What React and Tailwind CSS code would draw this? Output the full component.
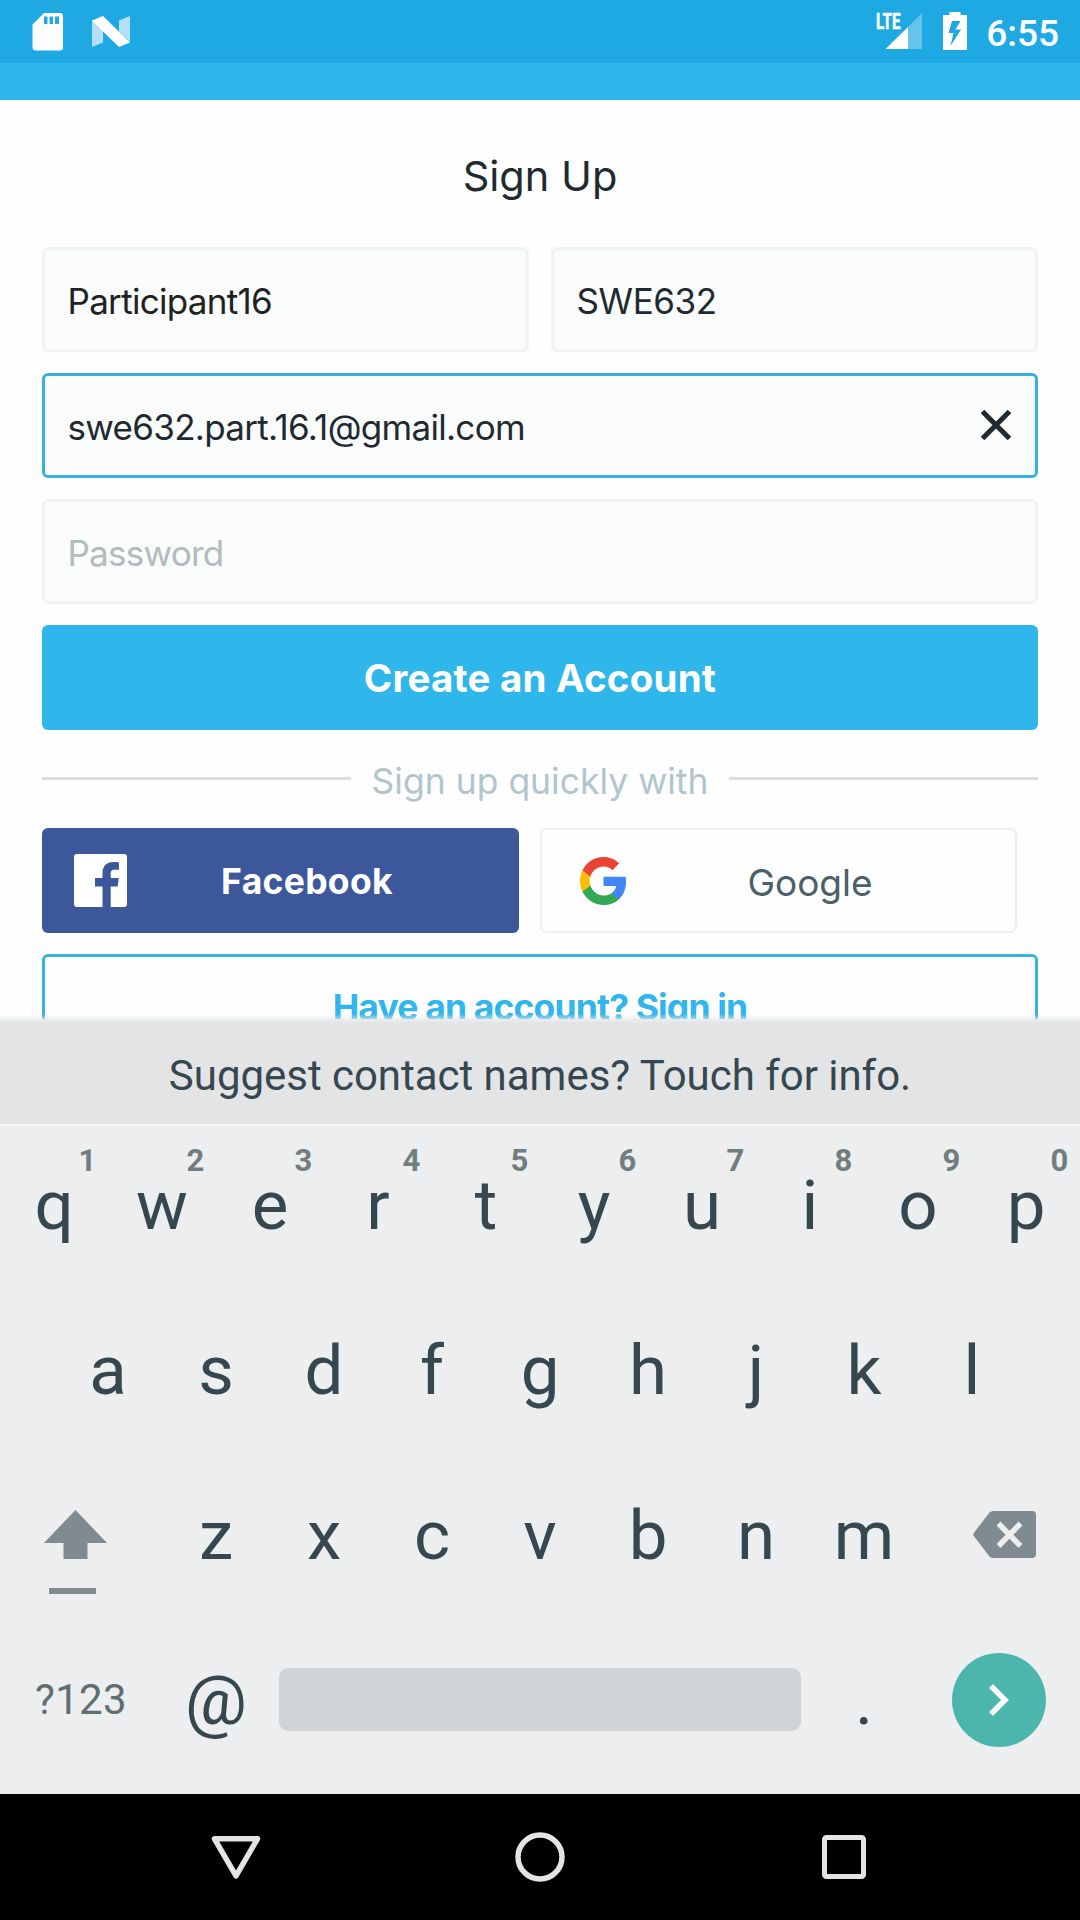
const TOP_ROW = "qwertyuiop".split("");
const HOME_ROW = "asdfghjkl".split("");
const BOTTOM_ROW = "zxcvbnm".split("");

function StatusBar() {
  return (
    <header className="flex h-[63px] shrink-0 items-start bg-[#1fa9e3] font-[Roboto,sans-serif]">
      <svg className="ml-8 mt-3 h-10 w-8" viewBox="0 0 32 40" fill="#fff">
        <path
          fillRule="evenodd"
          d="M12 1h16a3 3 0 0 1 3 3v31.500a3 3 0 0 1-3 3H3.500a3 3 0 0 1-3-3V12.500zM12 4.500v7.500h3.500V4.500zM17.500 4.500v7.500h3.500V4.500zM23 4.500v7.500h4V4.500z"
        />
      </svg>
      <svg className="ml-7 mt-4 h-8 w-[38px]" viewBox="0 0 38 32">
        <path d="M0 4v27l11-4.500V9zM27 4.500L38 0v26L27 15.500z" fill="#b5dff5" />
        <path d="M0 4.500L11 0l27 26.500-11 4.500L11 15.500z" fill="#fff" />
      </svg>
      <svg className="ml-auto mr-[21px] mt-3 h-[38px] w-[46px] overflow-visible" viewBox="0 0 46 38">
        <path d="M46 1v36H32V15z" fill="#66c3ec" />
        <path d="M32 15v22H9.500z" fill="#fff" />
        <text x="0" y="17" fill="#fff" stroke="#fff" strokeWidth="0.5" fontSize="22" fontWeight="700" textLength="24.500" lengthAdjust="spacingAndGlyphs">
          LTE
        </text>
      </svg>
      <svg className="mr-[19px] mt-3 h-[38px] w-6" viewBox="0 0 24 38" fill="#fff">
        <path fillRule="evenodd" d="M6.500 0h11v3H24v35H0V3h6.500zM9 9L5.500 21h5L7.500 34 18 17.500h-5.500L17.500 9z" />
      </svg>
      <span className="mr-[21px] mt-3 text-[37px] font-medium leading-[44px] text-white">6:55</span>
    </header>
  );
}

function Field({ children, className }) {
  return (
    <div className={`flex h-[105px] flex-1 items-center rounded-md border-[3px] bg-[#fafbfb] pl-[22.500px] pt-[3px] text-[35px] ${className}`}>
      {children}
    </div>
  );
}

function FacebookMark() {
  return (
    <svg className="ml-8 h-[53px] w-[53px] shrink-0" viewBox="0 0 53 53">
      <rect width="53" height="53" rx="3" fill="#fff" />
      <path d="M28.500 53V32.500H21V24h7.500v-4.500C28.500 12 32.500 8 39 8c2.500 0 5 .2 6 .4v7.300h-4.300c-3.300 0-4 1.600-4 4V24h8l-1 8.500h-7V53z" fill="#3d589a" />
    </svg>
  );
}

function GoogleMark() {
  return (
    <svg className="ml-[38px] h-12 w-[47px] shrink-0" viewBox="1 1 22 22" preserveAspectRatio="none">
      <path fill="#4285f4" d="M22.560 12.250c0-.78-.07-1.530-.2-2.250H12v4.260h5.920c-.26 1.370-1.040 2.530-2.210 3.310v2.770h3.570c2.080-1.920 3.280-4.740 3.280-8.090z" />
      <path fill="#34a853" d="M12 23c2.970 0 5.460-.98 7.280-2.660l-3.570-2.770c-.98.66-2.230 1.060-3.710 1.060-2.860 0-5.290-1.930-6.160-4.530H2.180v2.840C3.990 20.530 7.700 23 12 23z" />
      <path fill="#fbbc05" d="M5.840 14.090c-.22-.66-.35-1.360-.35-2.090s.13-1.430.35-2.090V7.070H2.180C1.430 8.550 1 10.220 1 12s.43 3.450 1.180 4.930l3.660-2.840z" />
      <path fill="#ea4335" d="M12 5.380c1.620 0 3.060.56 4.210 1.640l3.150-3.150C17.450 2.090 14.970 1 12 1 7.700 1 3.990 3.470 2.180 7.070l3.660 2.840c.87-2.600 3.300-4.530 6.160-4.530z" />
    </svg>
  );
}

function SignUpForm() {
  return (
    <main className="flex h-[919px] shrink-0 flex-col overflow-hidden bg-[#fefefe] px-[42px] font-[Inter,sans-serif]">
      <h1 className="flex h-[147px] shrink-0 items-center justify-center pt-[5px] text-[41.500px] text-[#1f2a30]">
        Sign Up
      </h1>
      <div className="flex flex-col gap-[21px]">
        <div className="flex gap-[22px]">
          <Field className="border-[#f0f2f3] tracking-[-0.7px] text-[#212121]">Participant16</Field>
          <Field className="border-[#f0f2f3] tracking-[-0.4px] text-[#1f2a30]">SWE632</Field>
        </div>
        <div className="flex">
          <Field className="justify-between border-[#38b0da] pr-[23px] tracking-[-0.7px] text-[#1f2a30]">
            <span>swe632.part.16.1@gmail.com</span>
            <svg className="mb-1 h-8 w-8" viewBox="0 0 32 32" stroke="#1f2a30" strokeWidth="5">
              <path d="M2.500 2.500l27 27M29.500 2.500l-27 27" />
            </svg>
          </Field>
        </div>
        <div className="flex">
          <Field className="border-[#f0f2f3] tracking-[-0.75px] text-[#b1bcbc]">Password</Field>
        </div>
        <button className="h-[105px] rounded-md bg-[#2fb6eb] pt-[2px] text-[38.5px] font-bold tracking-[0.2px] text-white">
          Create an Account
        </button>
      </div>
      <div className="flex h-[98px] shrink-0 items-center gap-[21px] text-[35.5px] text-[#b1c5cd]">
        <div className="mb-[2px] h-[3px] flex-1 bg-[#dae0e2]" />
        <span className="pt-[6px]">Sign up quickly with</span>
        <div className="mb-[2px] h-[3px] flex-1 bg-[#dae0e2]" />
      </div>
      <div className="flex shrink-0 gap-[21px]">
        <button className="flex h-[105px] w-[477px] items-center rounded-md bg-[#3d589a] text-[35.5px] font-bold tracking-[0.3px] text-white">
          <FacebookMark />
          <span className="flex-1 pr-[32px] pt-[2px] text-center">Facebook</span>
        </button>
        <button className="flex h-[105px] w-[477px] items-center rounded-md border-2 border-[#edf0f3] text-[37px] text-[#4b6069]">
          <GoogleMark />
          <span className="flex-1 pr-[22px] pt-1 text-center">Google</span>
        </button>
      </div>
      <button className="mt-[21px] h-[105px] shrink-0 rounded-md border-[3px] border-[#38b3e0] pt-[2px] text-[35.5px] font-bold tracking-[-0.85px] text-[#30b5ec]">
        Have an account? Sign in
      </button>
    </main>
  );
}

function Key({ label, hint }) {
  return (
    <div className="relative flex h-full w-[108px] items-center justify-center pb-px text-[69px] leading-none text-[#37474f]">
      {label}
      {hint && (
        <span className="absolute left-[77px] top-[21px] w-[21px] text-center text-[31px] font-bold text-[#717d80]">
          {hint}
        </span>
      )}
    </div>
  );
}

function Keyboard() {
  return (
    <section className="flex h-[775px] shrink-0 flex-col bg-[#eceeef] font-[Roboto,sans-serif]">
      <div className="-mt-[5px] h-[8px] shrink-0 bg-linear-to-b from-transparent to-[#e8eaeb]" />
      <div className="flex h-[102px] shrink-0 items-center justify-center bg-[#e2e4e5] pt-1 text-[42px] tracking-[-0.03px] text-[#37474f]">
        <span>Suggest contact names? Touch for info.</span>
      </div>
      <div className="h-[2px] shrink-0 bg-[#f5f6f7]" />
      <div className="-mt-[2px] flex h-[164px]">
        {TOP_ROW.map((k, i) => (
          <Key key={k} label={k} hint={String((i + 1) % 10)} />
        ))}
      </div>
      <div className="flex h-[165px] justify-center">
        {HOME_ROW.map((k) => (
          <Key key={k} label={k} />
        ))}
      </div>
      <div className="flex h-[165px]">
        <div className="flex w-[162px] flex-col pl-[44px] pt-[57px]">
          <svg className="h-[49px] w-[63px]" viewBox="0 0 63 49" fill="#7f8b90">
            <path d="M31.500 0L63 33H43.500v16H19.500V33H0z" />
          </svg>
          <div className="ml-[5px] mt-[29px] h-[6px] w-[47px] bg-[#7f8b90]" />
        </div>
        {BOTTOM_ROW.map((k) => (
          <Key key={k} label={k} />
        ))}
        <svg className="ml-[55px] mt-[58px] h-[47px] w-[63px]" viewBox="0 0 63 47">
          <path d="M16.500 1.500Q18 0 20 0H59q4 0 4 4v39q0 4-4 4H20q-2 0-3.500-1.500L.8 25q-1-1.500 0-3z" fill="#7f8b90" />
          <path d="M25.500 12.500l22 22.500M47.500 12.500L25.500 35" stroke="#eceeef" strokeWidth="5.500" />
        </svg>
      </div>
      <div className="flex h-[165px] items-center">
        <span className="flex w-[162px] justify-center pb-[2px] text-[42px] tracking-[0.3px] text-[#5f6e73]">?123</span>
        <Key label="@" />
        <div className="mb-[2px] ml-[9px] h-[63px] w-[522px] rounded-[9px] bg-[#d0d4d6]" />
        <div className="ml-[9px] h-full">
          <Key label="." />
        </div>
        <div className="mb-[2px] ml-[34px] flex h-[94px] w-[94px] items-center justify-center rounded-full bg-[#4db6ac]">
          <svg className="h-8 w-5" viewBox="0 0 20 32" fill="none" stroke="#fff" strokeWidth="5.500">
            <path d="M2 2l14 14L2 30" />
          </svg>
        </div>
      </div>
    </section>
  );
}

function NavBar() {
  return (
    <nav className="grid h-[126px] shrink-0 grid-cols-[472px_136px_472px] items-center bg-black">
      <svg className="ml-[211px] h-[50px] w-[50px]" viewBox="0 0 50 50" fill="none" stroke="#e4e4e4" strokeWidth="5.500" strokeLinejoin="round">
        <path d="M3.500 6.800h43L25 43.800z" />
      </svg>
      <svg className="h-[50px] w-[50px] justify-self-center" viewBox="0 0 50 50" fill="none" stroke="#e4e4e4" strokeWidth="5.500">
        <circle cx="25" cy="25" r="22" />
      </svg>
      <svg className="ml-[211px] h-[50px] w-[50px]" viewBox="0 0 50 50" fill="none" stroke="#e4e4e4" strokeWidth="5">
        <rect x="5.500" y="5.500" width="39" height="39" rx="2" />
      </svg>
    </nav>
  );
}

export default function App() {
  return (
    <div className="flex h-[1920px] w-[1080px] flex-col overflow-hidden">
      <StatusBar />
      <div className="h-[37px] shrink-0 bg-[#2fb6eb]" />
      <SignUpForm />
      <Keyboard />
      <NavBar />
    </div>
  );
}
